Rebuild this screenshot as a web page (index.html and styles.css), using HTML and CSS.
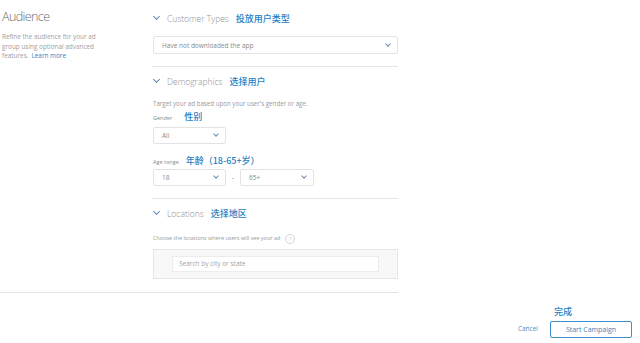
FILE: index.html
```html
<!DOCTYPE html>
<html lang="en">
<head>
  <meta charset="UTF-8">
  <meta name="viewport" content="width=device-width, initial-scale=1.0">
  <title>Audience</title>
  <link rel="stylesheet" href="styles.css">
</head>
<body>
  <div class="page">
    <!-- Left intro column -->
    <div class="intro">
      <h1>Audience</h1>
      <p>Refine the audience for your ad group using optional advanced <span>features.</span><a href="#">Learn more</a></p>
    </div>

    <!-- Right form column -->
    <div class="main">
      <div class="section">
        <div class="section-head">
          <span class="chev"></span>
          <span class="title">Customer Types</span>
          <span class="note">投放用户类型</span>
        </div>
        <div class="select wide">
          <span>Have not downloaded the app</span>
          <span class="caret"></span>
        </div>
      </div>

      <div class="section">
        <div class="section-head">
          <span class="chev"></span>
          <span class="title">Demographics</span>
          <span class="note">选择用户</span>
        </div>
        <p class="hint">Target your ad based upon your user's gender or age.</p>
        <div class="label">Gender<span class="note">性别</span></div>
        <div class="select small">
          <span>All</span>
          <span class="caret"></span>
        </div>
        <div class="label age">Age range<span class="note">年龄（18-65+岁）</span></div>
        <div class="range">
          <div class="select small">
            <span>18</span>
            <span class="caret"></span>
          </div>
          <span class="dash">-</span>
          <div class="select small">
            <span>65+</span>
            <span class="caret"></span>
          </div>
        </div>
      </div>

      <div class="section last">
        <div class="section-head">
          <span class="chev"></span>
          <span class="title">Locations</span>
          <span class="note">选择地区</span>
        </div>
        <p class="hint loc">Choose the locations where users will see your ad<span class="help">?</span></p>
        <div class="search-box">
          <div class="search-input">Search by city or state</div>
        </div>
      </div>
    </div>
  </div>

  <div class="rule"></div>

  <div class="actions">
    <a href="#" class="cancel">Cancel</a>
    <div class="finish">
      <span class="note">完成</span>
      <button class="start">Start Campaign</button>
    </div>
  </div>
</body>
</html>
```

FILE: styles.css
```css
body {
  margin: 0;
  font-family: "Open Sans", "Noto Sans CJK SC", sans-serif;
  color: #8a8a8a;
  background: #fff;
}
.page {
  display: flex;
  width: 398px;
}
.intro {
  width: 152px;
  padding: 8px 0 0 2px;
  box-sizing: border-box;
}
.intro h1 {
  margin: 0;
  font-size: 12.5px;
  font-weight: 300;
  color: #6d6d6d;
  letter-spacing: -0.6px;
}
.intro p {
  margin: 7px 0 0;
  font-size: 6.4px;
  line-height: 9.5px;
  color: #a0a0a0;
  width: 100px;
}
.intro a {
  color: #2b86c5;
  text-decoration: none;
  margin-left: 3px;
}
.main {
  width: 246px;
}
.section {
  padding: 11px 0 12px 1px;
  border-bottom: 1px solid #e6e6e6;
}
.section + .section {
  padding-top: 7px;
  padding-bottom: 12px;
}
.section.last {
  border-bottom: none;
  padding-bottom: 13px;
}
.section-head {
  display: flex;
  align-items: center;
  height: 14px;
}
.chev {
  width: 4px;
  height: 4px;
  border-right: 1px solid #5f87b3;
  border-bottom: 1px solid #5f87b3;
  transform: rotate(45deg);
  margin: -3px 8px 0 1px;
}
.title {
  font-size: 8.5px;
  font-weight: 300;
  color: #8f8f8f;
  margin-right: 7px;
}
.note {
  font-family: "Noto Sans CJK SC", sans-serif;
  font-size: 9px;
  font-weight: 500;
  color: #1f7fc4;
}
.select {
  display: flex;
  align-items: center;
  justify-content: space-between;
  box-sizing: border-box;
  border: 1px solid #e3e3e3;
  border-radius: 2px;
  background: #fff;
  font-size: 6.5px;
  color: #8a8a8a;
  padding: 0 7px 0 8px;
}
.select.wide {
  margin-top: 11px;
  height: 18px;
  width: 245px;
}
.select.small {
  height: 17px;
  width: 73px;
  margin-top: 4px;
}
.caret {
  width: 3px;
  height: 3px;
  border-right: 1px solid #6f8db0;
  border-bottom: 1px solid #6f8db0;
  transform: rotate(45deg);
  margin-top: -3px;
}
.hint {
  margin: 11px 0 0;
  font-size: 6.2px;
  line-height: 10px;
  color: #9a9a9a;
}
.label {
  margin-top: 3px;
  font-size: 5.5px;
  line-height: 10px;
  color: #8a8a8a;
}
.label .note {
  margin-left: 12px;
}
.label.age {
  margin-top: 12px;
}
.label.age .note {
  margin-left: 7px;
}
.range {
  display: flex;
  align-items: center;
  margin-top: -2px;
}
.range .select.small {
  margin-top: 4px;
  width: 74px;
}
.range .select.small:first-child {
  width: 73px;
}
.dash {
  width: 14px;
  text-align: center;
  font-size: 7px;
  margin-top: 4px;
}
.hint.loc {
  margin-top: 13px;
  font-size: 5.5px;
}
.help {
  display: inline-block;
  width: 8px;
  height: 8px;
  border: 1px solid #d5d5d5;
  border-radius: 50%;
  font-size: 5px;
  line-height: 8px;
  text-align: center;
  color: #c8c8c8;
  vertical-align: middle;
  margin-left: 5px;
}
.search-box {
  margin-top: 5px;
  width: 245px;
  height: 30px;
  box-sizing: border-box;
  border: 1px solid #e6e6e6;
  background: #f8f8f8;
  padding: 6px 18px;
}
.search-input {
  height: 16px;
  background: #fff;
  border: 1px solid #ececec;
  box-sizing: border-box;
  font-size: 6.5px;
  line-height: 14px;
  padding-left: 6px;
  color: #a5a5a5;
}
.rule {
  width: 398px;
  border-top: 1px solid #e3e3e3;
}
.actions {
  display: flex;
  justify-content: flex-end;
  align-items: flex-end;
  padding: 12px 8px 0 0;
}
.cancel {
  font-size: 6.5px;
  color: #4a8fc6;
  text-decoration: none;
  margin: 0 12px 5px 0;
}
.finish {
  display: flex;
  flex-direction: column;
  align-items: flex-start;
}
.finish .note {
  margin-left: 4px;
  line-height: 14px;
}
.start {
  margin-top: 2px;
  width: 82px;
  height: 17px;
  border: 1px solid #3d8fd0;
  border-radius: 2px;
  background: #fff;
  font-family: "Open Sans", sans-serif;
  font-size: 7px;
  color: #3f7fb8;
  padding: 0;
}
```
